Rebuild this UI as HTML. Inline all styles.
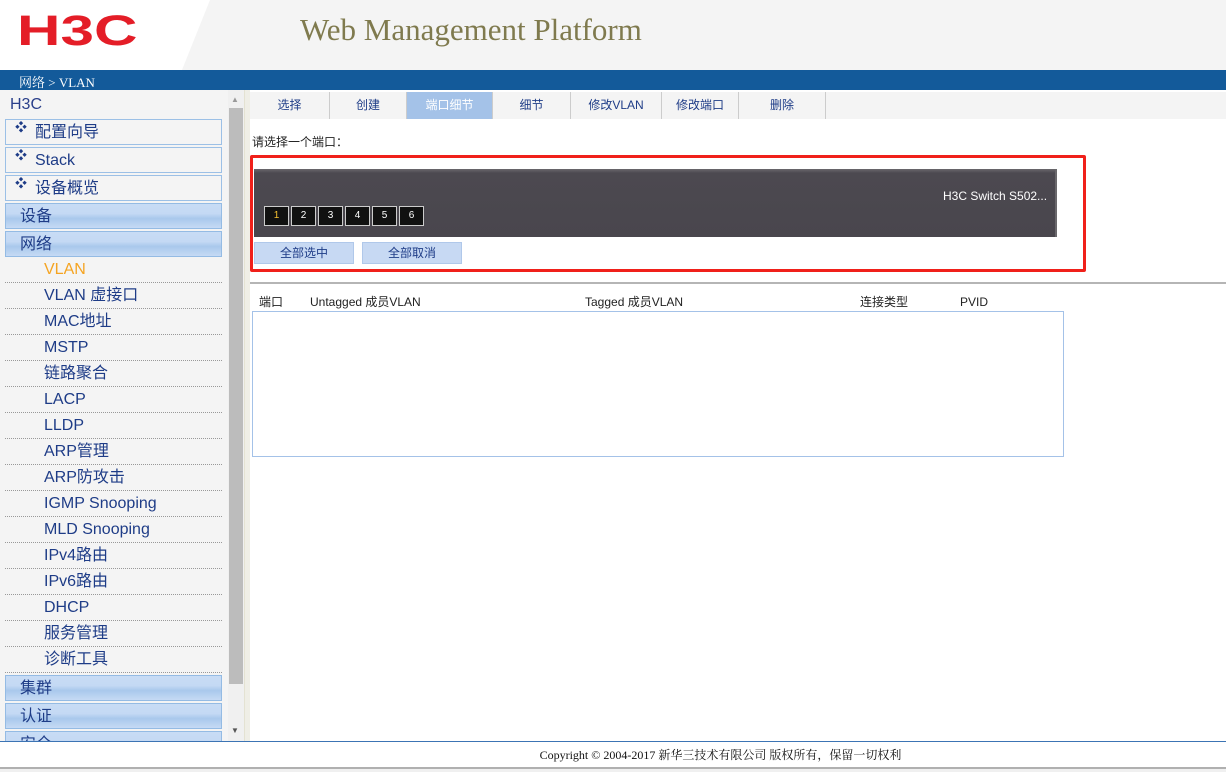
<!DOCTYPE html>
<html><head><meta charset="utf-8"><style>
*{margin:0;padding:0;box-sizing:border-box}
body{width:1226px;height:772px;overflow:hidden;background:#fff;font-family:"Liberation Sans","Noto Sans CJK SC",sans-serif;position:relative}
.abs{position:absolute}
.hdr{left:0;top:0;width:1226px;height:70px;background:#f4f4f4}
.bar{left:0;top:70px;width:1226px;height:20px;background:#135a9a;color:#fff;font:13px/20px "Liberation Serif","Noto Serif CJK SC",serif;padding:3px 0 0 19px;overflow:hidden}
.side{left:0;top:90px;width:228px;height:651px;background:#f4f4f4;overflow:hidden;color:#1e3c87}
.box,.cat,.sub{position:absolute;left:5px;width:217px;height:26px;font-size:16px;line-height:26px}
.box{border:1px solid #9cc0e6;background:#f4f4f4;padding-left:29px}
.box b{position:absolute;left:9px;top:0;font-size:12px;line-height:14px;color:#1e3c87}
.cat{border:1px solid #94bbe4;background:linear-gradient(#c8dcf5,#c4d9f4 40%,#a9c8ec 60%,#c6daf4);padding-left:14px}
.sub{border-bottom:1px dotted #999;padding-left:39px;line-height:26px}
.tabs{left:250px;top:92px;width:976px;height:27px;background:#f4f4f4}
.tab{position:absolute;top:0;height:27px;border-right:1px solid #ccc;font-size:12px;text-align:center;line-height:26px;color:#1e3c87}
.port{position:absolute;top:206px;width:25px;height:20px;border:1px solid #ccc;background:#111;color:#fff;font-size:10px;text-align:center;line-height:18px}
.btn{position:absolute;top:242px;width:100px;height:22px;background:#c7d9f3;border:1px solid #b0c8ea;color:#1e3c87;font-size:12px;text-align:center;line-height:20px}
.th{position:absolute;top:294px;font-size:12px;line-height:16px;color:#222}
</style></head><body>
<div class="abs hdr"></div>
<svg class="abs" style="left:0;top:0" width="210" height="70"><polygon points="0,0 210,0 182,70 0,70" fill="#fff"/></svg>
<div class="abs" style="left:17px;top:10px;font:bold 43px/43px 'Liberation Sans',sans-serif;color:#e41d27;transform:scaleX(1.4);transform-origin:left">H3C</div>
<div class="abs" style="left:300px;top:12px;font:31px/36px 'Liberation Serif',serif;color:#7f7a4e">Web Management Platform</div>
<div class="abs bar">网络 &gt; VLAN</div>
<div class="abs side">
<div style="position:absolute;left:10px;top:5px;font-size:16px;line-height:20px;color:#2a3f8a">H3C</div>
<div class="box" style="top:29px"><b>❖</b>配置向导</div>
<div class="box" style="top:57px"><b>❖</b>Stack</div>
<div class="box" style="top:85px"><b>❖</b>设备概览</div>
<div class="cat" style="top:113px">设备</div>
<div class="cat" style="top:141px">网络</div>
<div class="sub" style="top:167px;color:#f5a422">VLAN</div>
<div class="sub" style="top:193px">VLAN 虚接口</div>
<div class="sub" style="top:219px">MAC地址</div>
<div class="sub" style="top:245px">MSTP</div>
<div class="sub" style="top:271px">链路聚合</div>
<div class="sub" style="top:297px">LACP</div>
<div class="sub" style="top:323px">LLDP</div>
<div class="sub" style="top:349px">ARP管理</div>
<div class="sub" style="top:375px">ARP防攻击</div>
<div class="sub" style="top:401px">IGMP Snooping</div>
<div class="sub" style="top:427px">MLD Snooping</div>
<div class="sub" style="top:453px">IPv4路由</div>
<div class="sub" style="top:479px">IPv6路由</div>
<div class="sub" style="top:505px">DHCP</div>
<div class="sub" style="top:531px">服务管理</div>
<div class="sub" style="top:557px">诊断工具</div>
<div class="cat" style="top:585px">集群</div>
<div class="cat" style="top:613px">认证</div>
<div class="cat" style="top:641px">安全</div>
</div>
<div class="abs" style="left:228px;top:90px;width:16px;height:651px;background:#f0f0f0"></div>
<div class="abs" style="left:229px;top:108px;width:14px;height:576px;background:#bcbcbc"></div>
<div class="abs" style="left:231px;top:96px;font-size:8px;line-height:8px;color:#999">▲</div>
<div class="abs" style="left:231px;top:727px;font-size:8px;line-height:8px;color:#555">▼</div>
<div class="abs" style="left:244px;top:90px;width:6px;height:651px;background:#efeee6;border-left:1px solid #e4e2d2"></div>
<div class="abs tabs">
<div class="tab" style="left:0;width:80px">选择</div>
<div class="tab" style="left:80px;width:77px">创建</div>
<div class="tab" style="left:157px;width:86px;background:#a4c2e8;color:#fff">端口细节</div>
<div class="tab" style="left:243px;width:78px">细节</div>
<div class="tab" style="left:321px;width:91px">修改VLAN</div>
<div class="tab" style="left:412px;width:77px">修改端口</div>
<div class="tab" style="left:489px;width:87px">删除</div>
</div>
<div class="abs" style="left:252px;top:134px;font-size:12px;line-height:16px;color:#222">请选择一个端口：</div>
<div class="abs" style="left:250px;top:155px;width:836px;height:117px;border:3px solid #f0201a;border-radius:2px"></div>
<div class="abs" style="left:254px;top:169px;width:803px;height:68px;background:linear-gradient(#6a686c,#4c4950 4px,#49464d);border-right:2px solid #6a686c"></div>
<div class="abs" style="left:943px;top:188px;font-size:12px;line-height:16px;color:#fff">H3C Switch S502...</div>
<div class="port" style="left:264px;color:#f5c030">1</div>
<div class="port" style="left:291px">2</div>
<div class="port" style="left:318px">3</div>
<div class="port" style="left:345px">4</div>
<div class="port" style="left:372px">5</div>
<div class="port" style="left:399px">6</div>
<div class="btn" style="left:254px">全部选中</div>
<div class="btn" style="left:362px">全部取消</div>
<div class="abs" style="left:250px;top:282px;width:976px;height:2px;background:#b5b5b5"></div>
<div class="th" style="left:259px">端口</div>
<div class="th" style="left:310px">Untagged 成员VLAN</div>
<div class="th" style="left:585px">Tagged 成员VLAN</div>
<div class="th" style="left:860px">连接类型</div>
<div class="th" style="left:960px">PVID</div>
<div class="abs" style="left:252px;top:311px;width:812px;height:146px;border:1px solid #a4c2e8"></div>
<div class="abs" style="left:0;top:741px;width:1226px;height:28px;border-top:1px solid #3c74b4;border-bottom:2px solid #b0b0b0;background:#fff;text-align:center;font:12px 'Liberation Serif','Noto Serif CJK SC',serif;line-height:26px;padding-left:215px;color:#111">Copyright © 2004-2017 新华三技术有限公司 版权所有，保留一切权利</div>
<div class="abs" style="left:0;top:769px;width:1226px;height:3px;background:#f0f0f0"></div>
</body></html>
